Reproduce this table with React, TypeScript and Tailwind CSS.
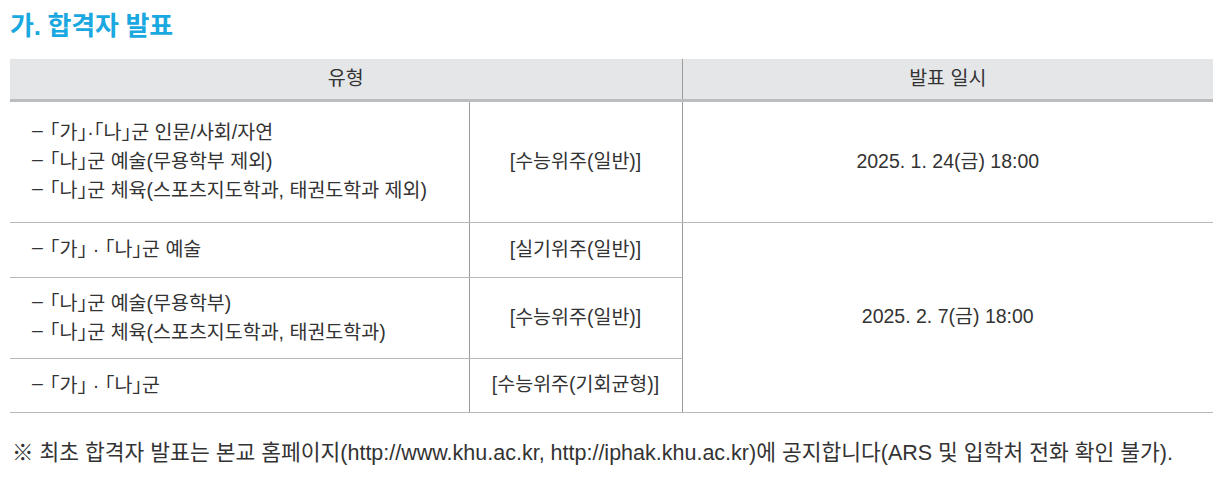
import React from "react"

const rows = [
  {
    lines: ["「가」·「나」군 인문/사회/자연", "「나」군 예술(무용학부 제외)", "「나」군 체육(스포츠지도학과, 태권도학과 제외)"],
    type: "[수능위주(일반)]",
    h: "h-[122px]",
  },
  { lines: ["「가」 · 「나」군 예술"], type: "[실기위주(일반)]", h: "h-[55px]" },
  {
    lines: ["「나」군 예술(무용학부)", "「나」군 체육(스포츠지도학과, 태권도학과)"],
    type: "[수능위주(일반)]",
    h: "h-[81px]",
  },
  { lines: ["「가」 · 「나」군"], type: "[수능위주(기회균형)]", h: "h-[54px]" },
]

export default function App() {
  return (
    <div
      className="bg-white w-[1232px] h-[486px] pl-[10px] pt-[10px] text-[#333] [font-feature-settings:'halt']"
      style={{ fontFamily: '"Liberation Sans", "Noto Sans CJK KR", sans-serif' }}
    >
      <h1 className="text-[26px] font-bold leading-[32px] text-[#19a8e0] tracking-[-0.01em]">가. 합격자 발표</h1>

      <table className="mt-[17px] w-[1203px] border-collapse table-fixed text-[19.5px]">
        <colgroup>
          <col className="w-[459px]" />
          <col className="w-[213px]" />
          <col className="w-[531px]" />
        </colgroup>
        <thead>
          <tr className="h-[41px] bg-[#e5e6e8]">
            <th colSpan={2} className="font-normal border-b-[3px] border-b-[#bcbdbf] border-r border-r-[#9a9a9a]">
              유형
            </th>
            <th className="font-normal border-b-[3px] border-b-[#bcbdbf]">발표 일시</th>
          </tr>
        </thead>
        <tbody>
          {rows.map((r, i) => (
            <tr key={i} className={r.h}>
              <td className="pl-[22px] border-b border-b-[#b8b8b8] border-r border-r-[#9a9a9a] leading-[29px]">
                {r.lines.map((l) => (
                  <div key={l}>
                    <span className="relative -top-[2px] mr-[7px]">–</span>
                    {l}
                  </div>
                ))}
              </td>
              <td className="text-center border-b border-b-[#b8b8b8] border-r border-r-[#9a9a9a]">{r.type}</td>
              {i === 0 && <td className="text-center border-b border-b-[#b8b8b8]">2025. 1. 24(금) 18:00</td>}
              {i === 1 && (
                <td rowSpan={3} className="text-center border-b border-b-[#b8b8b8]">
                  2025. 2. 7(금) 18:00
                </td>
              )}
            </tr>
          ))}
        </tbody>
      </table>

      <p className="mt-[24px] pl-[2px] text-[21.5px]">
        ※ 최초 합격자 발표는 본교 홈페이지(http://www.khu.ac.kr, http://iphak.khu.ac.kr)에 공지합니다(ARS 및 입학처 전화 확인 불가).
      </p>
    </div>
  )
}
